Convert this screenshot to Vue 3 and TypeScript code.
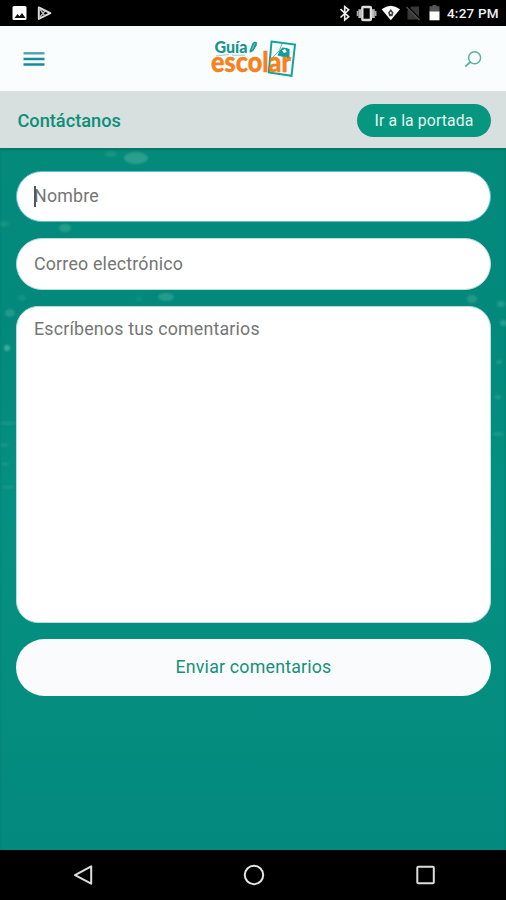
<script setup lang="ts">
import { ref } from 'vue'

interface Speck {
  x: number
  y: number
  rx: number
  ry: number
  o: number
}

const nombre = ref('')
const correo = ref('')
const comentarios = ref('')

const specks: Speck[] = [
  { x: 136, y: 10, rx: 12, ry: 6, o: 0.24 },
  { x: 111, y: 6, rx: 6, ry: 3, o: 0.13 },
  { x: 65, y: 80, rx: 6, ry: 4, o: 0.22 },
  { x: 4, y: 76, rx: 5, ry: 3, o: 0.13 },
  { x: 166, y: 149, rx: 8, ry: 4, o: 0.22 },
  { x: 139, y: 151, rx: 3, ry: 3, o: 0.08 },
  { x: 22, y: 150, rx: 4, ry: 3, o: 0.1 },
  { x: 10, y: 165, rx: 5, ry: 4, o: 0.2 },
  { x: 7, y: 200, rx: 3, ry: 3, o: 0.4 },
  { x: 472, y: 151, rx: 5, ry: 4, o: 0.2 },
  { x: 501, y: 156, rx: 4, ry: 3, o: 0.22 },
  { x: 504, y: 175, rx: 4, ry: 3, o: 0.26 },
  { x: 499, y: 214, rx: 3, ry: 2, o: 0.18 },
  { x: 498, y: 249, rx: 3, ry: 2, o: 0.2 },
  { x: 498, y: 286, rx: 6, ry: 2, o: 0.14 },
  { x: 8, y: 275, rx: 9, ry: 2, o: 0.1 },
  { x: 4, y: 297, rx: 5, ry: 1.5, o: 0.14 },
  { x: 5, y: 316, rx: 4, ry: 1.5, o: 0.14 },
  { x: 8, y: 339, rx: 7, ry: 1.5, o: 0.12 },
]
</script>

<template>
  <div class="screen">
    <div class="status">
      <svg class="status-left" viewBox="0 0 60 26" width="60" height="26">
        <rect x="12.5" y="6" width="14" height="14" rx="1.5" fill="#fff" />
        <path d="M14.5 18l3-4 2 2.2 2.5-3.2 3.5 5z" fill="#111" />
        <path d="M38.8 7.5l11.5 5.7-11.5 5.7z" fill="none" stroke="#ddd" stroke-width="2" stroke-linejoin="round" />
        <path d="M39 8l6 8M39 18l6-7" stroke="#bbb" stroke-width="1.3" />
      </svg>
      <div class="status-right">
        <svg viewBox="0 0 106 26" width="106" height="26">
          <path d="M1.5 9.2l8.2 7.5-4 3.3V6.6l4 3.2-8.2 7.7" fill="none" stroke="#eee" stroke-width="1.6" />
          <rect x="23.3" y="7" width="8.6" height="13" rx="1" fill="none" stroke="#ddd" stroke-width="2.4" />
          <path d="M20.8 9.2v8.8M34.4 9.2v8.8" stroke="#bbb" stroke-width="2.8" />
          <path d="M18.6 11v5M36.6 11v5" stroke="#aaa" stroke-width="1.8" />
          <path d="M42.6 9.2q9.2-7 18.4 0L51.8 20.3z" fill="#fff" />
          <path d="M51.8 9l2.7 3.5-1 3.8h-3.4l-1-3.8z" fill="#444" />
          <circle cx="51.8" cy="13" r="1" fill="#eee" />
          <path d="M68.5 19.6V10.5l4-4h7.5v13.1z" fill="#383838" />
          <path d="M68 6.5l13 13" stroke="#000" stroke-width="2.3" />
          <path d="M67.5 7l13 13" stroke="#555" stroke-width="1.2" />
          <path d="M90.5 6.2h3V5h4v1.2h3V12h-10z" fill="#555" />
          <path d="M90.5 11.5h10v8.8h-10z" fill="#fff" />
        </svg>
        <span class="clock">4:27 PM</span>
      </div>
    </div>

    <header class="header">
      <button class="icon-btn" aria-label="Menú">
        <svg viewBox="0 0 22 16" width="22" height="16">
          <path d="M.5 2.3h21" stroke="#4aa4b4" stroke-width="2.4" />
          <path d="M.5 8h21M.5 13.5h21" stroke="#178b9d" stroke-width="2.3" />
        </svg>
      </button>
      <svg class="logo" viewBox="0 0 110 55" width="110" height="55">
        <path d="M71.5 10.5L95 13.5 91.5 44.8 68.8 41.5z" fill="#f6fcfc" stroke="#199fa0" stroke-width="2" />
        <path d="M89.5 18v9.5l-12-3 2-5 3-3 4 .5z" fill="#159c98" />
        <path d="M82 19.5l3-1.5 1.8 3-3 1z" fill="#fff" />
        <path d="M70 29l9-9 3-7" fill="none" stroke="#65bdbb" stroke-width="1" />
        <text class="logo-guia" x="14.5" y="21.6" textLength="33" lengthAdjust="spacingAndGlyphs">Guía</text>
        <path d="M49.5 20l3-8 2-1.5 2.6 1-.4 3-3.4 5.5-3.3 1.7z" fill="#199c98" />
        <path d="M52 18.7l2.8-6.5" stroke="#6fc1b9" stroke-width="1" />
        <path d="M16 25l13-1.5M32 24.2h13" stroke="#71c6c0" stroke-width=".8" />
        <text class="logo-escolar" x="11" y="40.5" textLength="80" lengthAdjust="spacingAndGlyphs">escolar</text>
      </svg>
      <button class="icon-btn" aria-label="Buscar">
        <svg viewBox="0 0 18 18" width="18" height="18">
          <circle cx="10.6" cy="7.7" r="6" fill="none" stroke="#58b1a0" stroke-width="1.5" />
          <path d="M6.3 12L1.2 16.6" stroke="#58b1a0" stroke-width="1.8" />
        </svg>
      </button>
    </header>

    <div class="titlebar">
      <h1 class="title">Contáctanos</h1>
      <button class="home">Ir a la portada</button>
    </div>

    <main class="content">
      <svg class="backdrop" viewBox="0 0 506 702" width="506" height="702" aria-hidden="true">
        <ellipse
          v-for="(s, i) in specks"
          :key="i"
          :cx="s.x"
          :cy="s.y"
          :rx="s.rx"
          :ry="s.ry"
          :fill-opacity="s.o"
          fill="#a3e0c5"
        />
      </svg>
      <form class="form" @submit.prevent>
        <div class="field">
          <input v-model="nombre" class="control focused" type="text" placeholder="Nombre" />
          <span class="caret"></span>
        </div>
        <input v-model="correo" class="control mail" type="email" placeholder="Correo electrónico" />
        <textarea v-model="comentarios" class="control area" placeholder="Escríbenos tus comentarios"></textarea>
        <button class="send" type="submit">Enviar comentarios</button>
      </form>
    </main>

    <nav class="nav">
      <svg viewBox="0 0 24 24" width="24" height="24">
        <path d="M20.2 3.3v17.4L4 12.2z" fill="none" stroke="#ddd" stroke-width="2" stroke-linejoin="round" />
      </svg>
      <svg viewBox="0 0 24 24" width="24" height="24">
        <circle cx="12" cy="12" r="9.2" fill="none" stroke="#e4e4e4" stroke-width="2" />
      </svg>
      <svg viewBox="0 0 24 24" width="24" height="24">
        <rect x="4.3" y="3.8" width="16.5" height="16.5" rx="1" fill="none" stroke="#ddd" stroke-width="2" />
      </svg>
    </nav>
  </div>
</template>

<style>
body {
  margin: 0;
  background: #000;
}
</style>

<style scoped>
.screen {
  width: 506px;
  height: 900px;
  display: flex;
  flex-direction: column;
  overflow: hidden;
  font-family: Roboto, "Liberation Sans", sans-serif;
}
button {
  font-family: inherit;
  border: 0;
  padding: 0;
}
.status {
  height: 26px;
  flex: none;
  display: flex;
  justify-content: space-between;
  background: #000;
}
.status-right {
  display: flex;
  align-items: center;
  gap: 2px;
  padding-right: 8px;
}
.clock {
  width: 51px;
  color: #f2f2f2;
  font-size: 13.5px;
  font-weight: 500;
  line-height: 26px;
  white-space: nowrap;
  letter-spacing: 0.2px;
}
.header {
  height: 65px;
  flex: none;
  box-sizing: border-box;
  display: grid;
  grid-template-columns: 1fr 110px 1fr;
  align-items: center;
  padding: 0 24px 0 23px;
  background: #fafdfe;
}
.icon-btn {
  display: flex;
  background: none;
  justify-self: start;
}
.icon-btn:last-child {
  justify-self: end;
}
.logo {
  display: block;
  margin-left: 2px;
}
.logo-guia {
  font: 900 16px Lato, sans-serif;
  fill: #17958e;
}
.logo-escolar {
  font: 900 27.5px Lato, sans-serif;
  fill: #f58220;
  stroke: #f58220;
  stroke-width: 0.4px;
}
.titlebar {
  height: 57px;
  flex: none;
  box-sizing: border-box;
  display: flex;
  justify-content: space-between;
  align-items: center;
  padding: 1px 15px 0 17.5px;
  background: #d8dfdf;
}
.title {
  margin: 0;
  color: #099078;
  font-size: 18.2px;
  font-weight: 500;
}
.home {
  width: 134px;
  height: 33px;
  border-radius: 17px;
  background: #079680;
  color: #e2f6f0;
  font-size: 15.8px;
  letter-spacing: 0.1px;
}
.content {
  position: relative;
  flex: 1;
  background: linear-gradient(#048a7b, #02897c 25%, #049082 50%, #048e80 75%, #04897e);
  box-shadow: inset 0 2px 2px #087766;
}
.backdrop {
  position: absolute;
  inset: 0;
  filter: blur(1.2px);
}
.form {
  position: relative;
  display: flex;
  flex-direction: column;
  padding: 23px 15px 0 16px;
}
.field {
  position: relative;
  display: flex;
}
.control {
  display: block;
  box-sizing: border-box;
  width: 100%;
  height: 51px;
  margin: 0;
  padding: 0 17px 1px;
  border: 1px solid #b7dddd;
  border-radius: 26px;
  background: #fff;
  color: #555;
  font-family: inherit;
  font-size: 17.8px;
  letter-spacing: 0.2px;
  outline: none;
  resize: none;
}
.control::placeholder {
  color: #757575;
  opacity: 1;
}
.focused {
  padding-bottom: 2px;
  border-color: #5fbdd0;
}
.caret {
  position: absolute;
  left: 18px;
  top: 15px;
  width: 1.5px;
  height: 21px;
  background: #555;
}
.mail {
  margin-top: 16px;
  height: 52px;
}
.area {
  margin-top: 16px;
  height: 317px;
  border-radius: 22px;
  padding-top: 11px;
  line-height: 22px;
}
.send {
  margin-top: 16px;
  height: 57px;
  padding-bottom: 2px;
  border-radius: 29px;
  background: #fafbfc;
  color: #16907a;
  font-size: 17.8px;
  letter-spacing: 0.2px;
}
.nav {
  height: 50px;
  flex: none;
  box-sizing: border-box;
  display: flex;
  align-items: center;
  justify-content: space-between;
  padding: 0 69px 0 71px;
  background: #000;
}
</style>
